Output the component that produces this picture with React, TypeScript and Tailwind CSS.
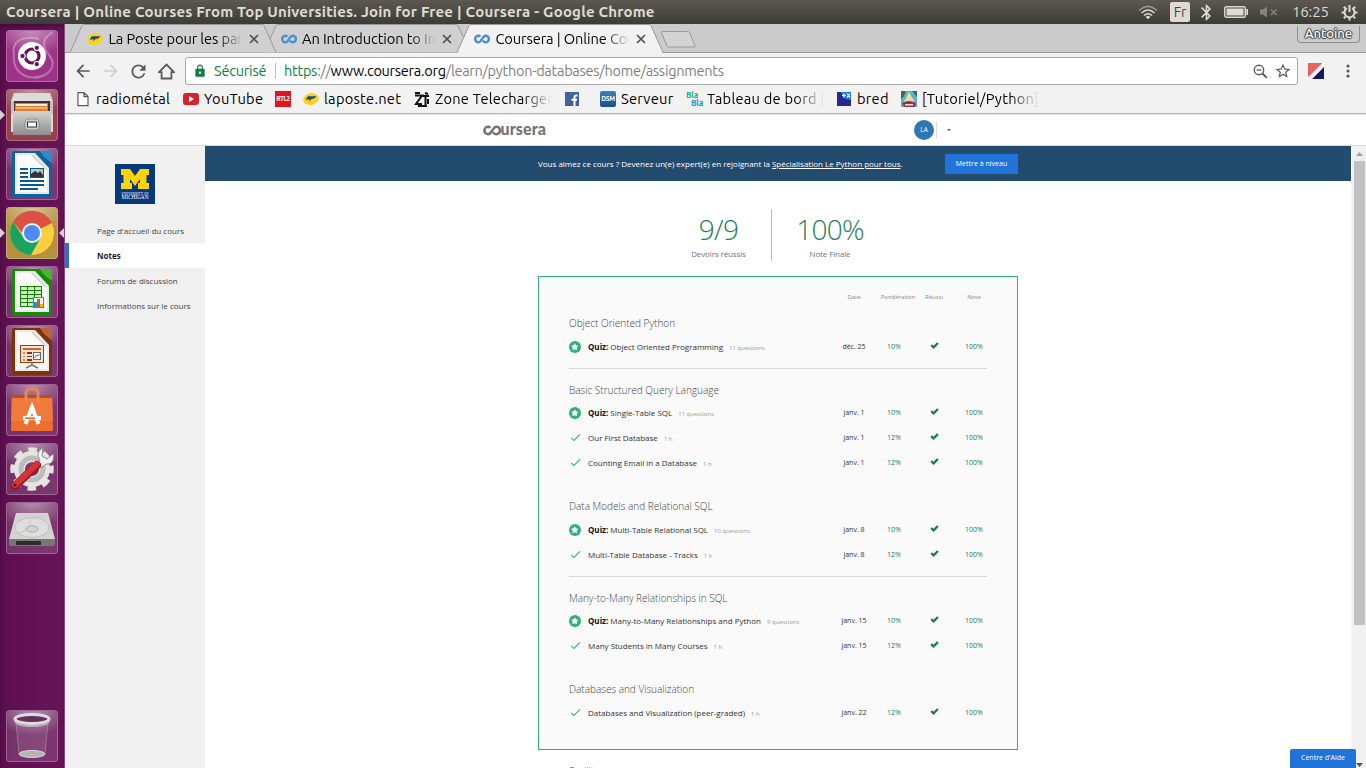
import type { ReactNode } from "react";
import { MdArrowBack, MdArrowForward, MdRefresh, MdLock, MdStarBorder, MdCheck, MdBluetooth } from "react-icons/md";
import { FaStar } from "react-icons/fa";

/* ---------- small marks ---------- */

function CourseraMark({ className, color = "#4a90d0", width = 3 }: { className: string; color?: string; width?: number }) {
  return (
    <svg className={className} viewBox="0 0 20 12" fill="none" stroke={color} strokeWidth={width}>
      <path d="M8 3C7.300 2.300 6.500 1.900 5.500 1.900a4.100 4.100 0 0 0 0 8.200c4.200 0 4.800-8.200 9-8.200a4.100 4.100 0 0 1 0 8.200c-1.600 0-2.900-.9-3.600-2.200" />
    </svg>
  );
}

function PosteMark() {
  return (
    <svg className="size-4 shrink-0" viewBox="0 0 16 16">
      <ellipse cx="8" cy="8" rx="7.800" ry="5.800" fill="#fbd31a" transform="rotate(-14 8 8)" />
      <path d="M5 5.300h5.500l3-.3-2.500 2.700H9L5.500 11l1.500-2.600H2.500z" fill="#1d4d7c" />
    </svg>
  );
}

/* ---------- launcher ---------- */

function Tile({ children, tint = "bg-white/15", active = false }: { children?: ReactNode; tint?: string; active?: boolean }) {
  return (
    <div className="relative flex h-[52px] w-full shrink-0 justify-center">
      <div className={`relative -left-[0.5px] size-[52px] overflow-hidden rounded-[4px] border border-white/25 ${tint}`}>
        <svg className="size-full" viewBox="1 1 50 50">
          <defs>
            <radialGradient id="sheen" cx="0.5" cy="0" r="0.75">
              <stop offset="0" stopColor="#fff" stopOpacity="0.45" />
              <stop offset="1" stopColor="#fff" stopOpacity="0" />
            </radialGradient>
          </defs>
          <rect width="52" height="34" fill="url(#sheen)" />
          {children}
        </svg>
      </div>
      {active && (
        <svg className="absolute top-[21px] left-0 h-2.5 w-[5px]" viewBox="0 0 5 10">
          <path d="M0 0l5 5-5 5z" fill="#d8d0d6" />
        </svg>
      )}
    </div>
  );
}

function OfficePage({ dark, mid, children }: { dark: string; mid: string; children: ReactNode }) {
  return (
    <>
      <path d="M8 3h26l12 13v31q0 3-3 3H9q-3 0-3-3V5q0-2 2-2z" fill={dark} />
      <path d="M34 3h10q2 0 2 2v9q-7-2-12-11z" fill={mid} />
      <path d="M9 5h20l14 15v26H9z" fill="#e9e9e9" />
      <path d="M11 7h16l14 15v22H11z" fill="#fafafa" />
      <path d="M27 7l14 15-2-1L25 7z" fill="#c8c8c8" />
      {children}
    </>
  );
}

function Launcher() {
  const metal = (
    <defs>
      <linearGradient id="metal" x1="0" y1="0" x2="0" y2="1">
        <stop offset="0" stopColor="#d4d4d2" />
        <stop offset="1" stopColor="#8e8e8c" />
      </linearGradient>
    </defs>
  );
  return (
    <nav className="flex w-[65px] shrink-0 flex-col gap-[7px] border-r border-[#8a4b80] bg-linear-to-r from-[#5c0f50] to-[#681558] pt-1.5 shadow-[inset_0_3px_4px_rgba(0,0,0,0.3)]">
      <Tile tint="bg-[#9d3487]">
        <g fill="none" stroke="#fff" strokeOpacity="0.3" strokeWidth="2">
          <path d="M47 2c-9 5-13 12-4 23s0 21-14 23M8 25C5 11 17 5 33 9M8 25c-2 18 14 27 31 20" />
        </g>
        <circle cx="26" cy="26" r="14" fill="#fff" />
        <circle cx="26" cy="26" r="7" fill="none" stroke="#66155c" strokeWidth="3.200" />
        <g fill="#66155c" stroke="#fff" strokeWidth="1.100">
          <circle cx="16.500" cy="26" r="2.700" />
          <circle cx="30.800" cy="17.800" r="2.700" />
          <circle cx="30.800" cy="34.200" r="2.700" />
        </g>
      </Tile>
      <Tile tint="bg-[#94414d]" active>
        {metal}
        <path d="M8 4h36l3 8v31H5V12z" fill="#dcdcda" />
        <path d="M5 12h42v13H5z" fill="#c4c4c2" />
        <path d="M8 12h36v10H8z" fill="#4b3030" />
        <path d="M9 14h33v8H9z" fill="#e07b34" />
        <path d="M10 15h31v2H10z" fill="#fff0d8" />
        <path d="M10 18h31v2H10z" fill="#ffb25a" />
        <path d="M7 22h38v24H7z" fill="url(#metal)" />
        <rect x="19" y="30" width="14" height="11" rx="3" fill="#cfcfcd" stroke="#909090" />
        <rect x="21.500" y="33" width="9" height="5" fill="#fff" stroke="#333" />
      </Tile>
      <Tile>
        <OfficePage dark="#0e639c" mid="#2c8cc8">
          <path d="M14 20h8v2h-8zM14 24h8v2h-8zM14 28h8v2h-8zM14 32h24v2H14zM14 36h24v2H14zM14 40h18v2H14z" fill="#0b5a8e" />
          <rect x="24.500" y="20.500" width="13" height="9" fill="#9ed0ee" stroke="#0b5a8e" />
          <path d="M25 29v-3l4-3 3 2 2-2 3 4v2z" fill="#333" />
          <circle cx="35" cy="22.500" r="1.500" fill="#f4b400" />
        </OfficePage>
      </Tile>
      <div className="relative">
        <Tile tint="bg-[#b3913f]" active>
          <circle cx="26" cy="26" r="22" fill="#ffcd40" />
          <path d="M26 26L7 15A22 22 0 0 1 46 16z" fill="#dd5144" />
          <path d="M26 16h19.700A22 22 0 0 0 7 15l10 12z" fill="#dd5144" />
          <path d="M7 15A22 22 0 0 0 25 48l9.500-17L20 34z" fill="#1aa260" />
          <circle cx="26" cy="26" r="10" fill="#f4f4f4" />
          <circle cx="26" cy="26" r="8" fill="#4c8bf5" />
        </Tile>
        <svg className="absolute top-[21px] right-0 h-2.5 w-[5px]" viewBox="0 0 5 10">
          <path d="M5 0L0 5l5 5z" fill="#d8d0d6" />
        </svg>
      </div>
      <Tile>
        <OfficePage dark="#178a08" mid="#46b532">
          <rect x="14" y="20" width="22" height="21" fill="#118000" />
          <g fill="#d3f4c4">
            {[21, 25, 29, 33, 37].map((y) => (
              <path key={y} d={`M15 ${y}h6v3h-6zM22 ${y}h6v3h-6zM29 ${y}h6v3h-6z`} />
            ))}
          </g>
          <rect x="27.500" y="31.500" width="10" height="10" fill="#fff" stroke="#777" />
          <path d="M28 36h3v5h-3z" fill="#1e90e0" />
          <path d="M31 33h3v8h-3z" fill="#d0581c" />
          <path d="M34 38h3v3h-3z" fill="#f4b400" />
        </OfficePage>
      </Tile>
      <Tile>
        <OfficePage dark="#7e3207" mid="#b9653a">
          <rect x="14.500" y="20.500" width="23" height="17" fill="#f7e3d8" stroke="#9c3c08" />
          <path d="M17 23h18v2H17z" fill="#d86020" />
          <path d="M17 27h2v2h-2zM17 31h2v1h-2zM17 34h2v2h-2z" fill="#e08050" />
          <path d="M21 27h5v2h-5zM21 31h5v1h-5zM21 34h5v2h-5z" fill="#8c3608" />
          <rect x="27.500" y="27.500" width="7" height="7" fill="#fff" stroke="#666" />
          <path d="M28.500 33l2-3 1.500 1 2-2.500" stroke="#1a9a1a" fill="none" />
          <path d="M26 38v2l-6 3M26 40l6 3" stroke="#777" strokeWidth="1.500" fill="none" />
        </OfficePage>
      </Tile>
      <Tile>
        <path d="M6 11h40l1 36H5z" fill="#ec6f2e" />
        <path d="M6 11h40l1 26H5z" fill="#ee7a3c" />
        <path d="M6 11h40v3H6z" fill="#b85018" />
        <path d="M20 18V9q0-4 4-4h4q4 0 4 4v9" fill="none" stroke="#e8835a" strokeWidth="3" />
        <path d="M19.500 40l6.500-17 6.500 17" fill="none" stroke="#fff" strokeWidth="4" />
        <path d="M17 32h18v4H17z" fill="#fff" />
        <path d="M19 33.500h10v1.500H19z" fill="#e86018" />
      </Tile>
      <Tile>
        <circle cx="26" cy="26" r="19" fill="none" stroke="#e2e2e0" strokeWidth="5.500" strokeDasharray="8.400 6.520" strokeDashoffset="4.200" />
        <circle cx="26" cy="26" r="12.500" fill="none" stroke="#e4e4e2" strokeWidth="11" />
        <circle cx="26" cy="26" r="11" fill="none" stroke="#bcbcba" strokeWidth="5" />
        <path d="M37 5c-6 3-6 8-3 12l-3 4 4 4 5-4c6 1 9-5 7-10l-6 5-5-3z" fill="#f2f2f2" stroke="#8b8b89" />
        <path d="M31 22L9 43" stroke="#96161b" strokeWidth="8" strokeLinecap="round" />
        <path d="M31 21L9 42" stroke="#d43437" strokeWidth="6" strokeLinecap="round" />
        <circle cx="9" cy="42" r="1.500" fill="#761015" />
      </Tile>
      <Tile>
        <path d="M10 11h32l7 26H3z" fill="#d4d4d2" />
        <path d="M3 37h46v5q0 2-2 2H5q-2 0-2-2z" fill="#777" />
        <path d="M10 39h25v4H10z" fill="#2c2c2c" />
        <ellipse cx="26" cy="25.500" rx="17" ry="10" fill="#dededc" stroke="#c0c0be" />
        <ellipse cx="26" cy="27" rx="6" ry="3" fill="#d4d4d2" stroke="#aaa" />
        <path d="M10 32q16-4 14-10t14-8" fill="none" stroke="#c4c4c4" />
      </Tile>
      <div className="mt-auto mb-1.5">
        <Tile>
          <path d="M10 11l3 33q13 6 26 0l3-33z" fill="#ddd0dc" fillOpacity="0.12" stroke="#fff" strokeOpacity="0.25" />
          <ellipse cx="26" cy="44" rx="13" ry="3.500" fill="#b5b5b3" stroke="#d5d5d3" />
          <ellipse cx="26" cy="9" rx="17" ry="4.500" fill="#63305c" stroke="#dcdcda" strokeWidth="3" />
          <path d="M8 9q1 6 18 6t18-6l-1 4q-4 4-17 4T9 13z" fill="#b9b9b7" />
        </Tile>
      </div>
    </nav>
  );
}

/* ---------- system bar ---------- */

function SystemBar() {
  return (
    <header className="flex h-6 shrink-0 items-center bg-linear-to-b from-[#5b5950] to-[#3c3b37] pl-1.5 text-[#dfdbd2]">
      <h1 className="grow text-[15px] font-bold tracking-[0.200px] whitespace-nowrap">
        Coursera | Online Courses From Top Universities. Join for Free | Coursera - Google Chrome
      </h1>
      <svg className="h-4 w-5 shrink-0" viewBox="0 0 20 16" fill="none" stroke="#dfdbd2" strokeWidth="1.600">
        <path d="M1 6.500q9-8 18 0" strokeOpacity="0.55" />
        <path d="M3.500 9q6.500-6 13 0M6 11.500q4-3.500 8 0" />
        <path d="M7.500 13q2.500-2 5 0L10 15.300z" fill="#dfdbd2" stroke="none" />
      </svg>
      <span className="ml-3 flex h-5 w-5 shrink-0 items-center justify-center rounded-[2px] bg-[#dfdbd2] text-[14px] text-[#45443f]">Fr</span>
      <MdBluetooth className="ml-[7px] size-[19px] shrink-0" />
      <svg className="ml-2 h-3.5 w-6 shrink-0" viewBox="0 0 24 14">
        <rect x="0.750" y="1.750" width="20.500" height="10.500" rx="1.500" fill="none" stroke="#dfdbd2" strokeWidth="1.400" />
        <path d="M2.500 3.500h17v7h-17zM22.300 4H24v6h-1.700z" fill="#dfdbd2" />
      </svg>
      <svg className="ml-3 h-3.5 w-[18px] shrink-0" viewBox="0 0 18 14">
        <path d="M0 4.500h3l4-3v11l-4-3H0z" fill="#85837b" />
        <path d="M11 4.500l5.500 5.500M16.500 4.500L11 10" stroke="#85837b" strokeWidth="1.500" />
      </svg>
      <span className="ml-[14px] w-10 shrink-0 text-[15px] tracking-[-0.150px] whitespace-nowrap">16:25</span>
      <svg className="mr-2 ml-[9px] size-[17px] shrink-0" viewBox="0 0 17 17" fill="none" stroke="#dfdbd2">
        <path d="M5.800 4.200a5 5 0 1 0 5.400 0" strokeWidth="2" />
        <path d="M8.500 1v7" strokeWidth="2" />
        <path d="M.5 8.500h2.500M14 8.500h2.500M2.800 2.800l1.500 1.500M14.200 2.800l-1.500 1.500M2.800 14.200l1.500-1.500M14.200 14.200l-1.500-1.500M8.500 14v2.500" strokeWidth="2" />
      </svg>
    </header>
  );
}

/* ---------- browser chrome ---------- */

function Tab({ icon, title, stack, active = false }: { icon: ReactNode; title: string; stack: string; active?: boolean }) {
  return (
    <div className={`relative -mr-[12.500px] h-[29px] w-[206px] shrink-0 ${stack}`}>
      <svg className="absolute inset-0 h-[29px] w-[206px]" viewBox="0 0 206 29">
        <path d="M0 28.500L12 1.500Q12.500.5 14 .5H192Q193.500.5 194 1.500L206 28.500" fill={active ? "#f2f2f2" : "#d0d0d0"} stroke="#999" />
        {active && <path d="M1 28h204v1H1z" fill="#f2f2f2" />}
      </svg>
      <div className="relative flex h-full items-center pl-[17px]">
        {icon}
        <span className="ml-[5.500px] w-[134px] overflow-hidden mask-r-from-80% text-[14.667px] tracking-[-0.120px] whitespace-nowrap text-black">{title}</span>
        <svg className="ml-[6px] size-2.5 shrink-0" viewBox="0 0 10 10">
          <path d="M1 1l8 8M9 1L1 9" stroke="#505050" strokeWidth="1.700" />
        </svg>
      </div>
    </div>
  );
}

function TabStrip() {
  return (
    <div className="flex h-[29px] shrink-0 items-start bg-[#cbcbcb] pl-[5px] shadow-[inset_0_-1px_0_#999]">
      <Tab stack="z-20" icon={<PosteMark />} title="La Poste pour les particuliers" />
      <Tab stack="z-10" icon={<CourseraMark className="h-4 w-4 shrink-0" />} title="An Introduction to Interactive" />
      <Tab stack="z-30" active icon={<CourseraMark className="h-4 w-4 shrink-0" />} title="Coursera | Online Courses" />
      <svg className="mt-[7px] ml-[10px] h-[17px] w-[35px] shrink-0" viewBox="0 0 35 17">
        <path d="M1.500.5h25q1.500 0 2 1l5.500 13q.5 1.500-1 1.500H8q-1.500 0-2-1L.7 2Q.3.5 1.500.5z" fill="#d3d3d3" stroke="#999" />
      </svg>
      <div className="mt-0.5 mr-1.5 ml-auto flex h-[17px] w-[63px] items-center justify-center rounded-b-[4px] border border-t-0 border-[#8f8f8f] text-[13px] font-medium text-white [text-shadow:0_0_1px_#333,1px_0_1px_#444,-1px_0_1px_#444,0_1px_1px_#444,0_-1px_1px_#444]">
        Antoine
      </div>
    </div>
  );
}

function AddressRow() {
  return (
    <div className="flex h-[36px] shrink-0 items-center bg-[#f2f2f2] pl-[8px] text-[#5a5a5a]">
      <MdArrowBack className="size-5 shrink-0" />
      <MdArrowForward className="ml-2 size-5 shrink-0 text-[#d0d0d0]" />
      <MdRefresh className="ml-[7px] size-[21px] shrink-0" />
      <svg className="ml-[9px] size-[17px] shrink-0" viewBox="0 0 17 17" fill="none" stroke="#5a5a5a" strokeWidth="1.800">
        <path d="M1 9.200L8.500 1.500 16 9.200h-2.600v6.300H3.600V9.200z" />
      </svg>
      <div className="ml-[10px] flex h-7 w-[1113px] shrink-0 items-center rounded-[3px] border border-[#a9a9a9] bg-white pl-[7px] text-[14.500px] whitespace-nowrap">
        <MdLock className="size-[14px] shrink-0 text-[#0b8043]" />
        <span className="ml-[7px] w-[53px] tracking-[-0.200px] text-[#0b8043]">Sécurisé</span>
        <span className="ml-2 h-4 w-px bg-[#c0c0c0]" />
        <span className="ml-2 grow tracking-[-0.265px] text-[#808080]">
          <span className="text-[#0b8043]">https</span>://<span className="text-black">www.coursera.org</span>/learn/python-databases/home/assignments
        </span>
        <svg className="size-[15px] shrink-0" viewBox="0 0 15 15" fill="none" stroke="#5a5a5a">
          <circle cx="6" cy="6" r="4.700" strokeWidth="1.400" />
          <path d="M3.500 6h5" strokeWidth="1.300" />
          <path d="M9.500 9.500l4.300 4.300" strokeWidth="1.900" />
        </svg>
        <MdStarBorder className="mr-[5px] ml-[6px] size-[18px]" />
      </div>
      <svg className="ml-[10px] size-4 shrink-0" viewBox="0 0 16 16">
        <path d="M0 0h16v16H0z" fill="#fff" />
        <path d="M0 0h14.500L0 14.500z" fill="#e8665f" />
        <path d="M16 4v12H4z" fill="#1c1464" />
      </svg>
      <svg className="ml-[22px] h-3.5 w-1 shrink-0" viewBox="0 0 4 14" fill="#5a5a5a">
        <circle cx="2" cy="2" r="1.600" />
        <circle cx="2" cy="7" r="1.600" />
        <circle cx="2" cy="12" r="1.600" />
      </svg>
    </div>
  );
}

function Bookmark({ icon, label, width, fade = false }: { icon: ReactNode; label?: string; width: string; fade?: boolean }) {
  return (
    <div className={`flex shrink-0 items-center gap-[5px] ${width}`}>
      {icon}
      {label && <span className={`whitespace-nowrap ${fade ? "w-[117px] overflow-hidden mask-r-from-75%" : ""}`}>{label}</span>}
    </div>
  );
}

function BookmarkBar() {
  const box = "size-4 shrink-0";
  return (
    <div className="flex h-[25px] shrink-0 items-center border-b border-[#b2b2b2] bg-[#f2f2f2] pb-[5px] pl-[10px] text-[14.667px] tracking-[0.240px] text-black">
      <Bookmark width="w-[108px]" label="radiométal" icon={
        <svg className={box} viewBox="0 0 16 16" fill="#fff" stroke="#5a5a5a" strokeWidth="1.200">
          <path d="M3 1.600h6l4 4v9H3zM9 1.600v4h4" />
        </svg>} />
      <Bookmark width="w-[92px]" label="YouTube" icon={
        <svg className={box} viewBox="0 0 16 16">
          <rect y="2" width="16" height="12" rx="3" fill="#d42428" />
          <path d="M6 5l5 3-5 3z" fill="#fff" />
        </svg>} />
      <Bookmark width="w-[28px]" icon={
        <span className="flex size-4 items-center justify-center bg-[#e0141e] text-[6.500px] font-bold tracking-[-0.500px] text-white">RTL2</span>} />
      <Bookmark width="w-[111px]" label="laposte.net" icon={<PosteMark />} />
      <Bookmark width="w-[150px]" fade label="Zone Telecharger" icon={
        <svg className={box} viewBox="0 0 16 16" fill="none" stroke="#111" strokeWidth="2">
          <path d="M1 2h5M11 2l3 1M1 4.500h7L2 13h6M8 5h7M11.500 5v9M14 13V8M4 15h9" />
        </svg>} />
      <Bookmark width="w-[36px]" icon={
        <svg className="ml-px size-[14px] shrink-0" viewBox="0 0 14 14">
          <path d="M0 0h14v14H0z" fill="#4560a0" />
          <path d="M12.500 3.500h-1.700q-1.300 0-1.300 1.500v9M6.500 7.800h5.500" stroke="#fff" strokeWidth="2" fill="none" />
        </svg>} />
      <Bookmark width="w-[86px]" label="Serveur" icon={
        <span className="flex size-4 shrink-0 items-center justify-center rounded-[2px] bg-linear-to-b from-[#3c82c0] to-[#164f88] text-[6.500px] font-bold tracking-[-0.300px] text-white">DSM</span>} />
      <Bookmark width="w-[150px]" fade label="Tableau de bord | Bla" icon={
        <span className="flex size-4 shrink-0 flex-col text-[8.500px] leading-[8px] font-bold tracking-[-0.300px]">
          <span className="text-[#12b28c]">Bla</span>
          <span className="-mr-px self-end text-[#1098dc]">Bla</span>
        </span>} />
      <Bookmark width="w-[65px]" label="bred" icon={
        <svg className={box} viewBox="0 0 16 16">
          <path d="M1 1h14v14H1z" fill="#28288c" />
          <path d="M5 1h10v8q-9 0-10-8z" fill="#1478f0" />
          <path d="M6 4.500h4M8 2.500v4M11 2.500l3 4M14 2.500l-3 4" stroke="#fff" strokeWidth="1.200" />
        </svg>} />
      <Bookmark width="w-[140px]" fade label="[Tutoriel/Python]" icon={
        <svg className={box} viewBox="0 0 16 16">
          <path d="M0 0h16v16H0z" fill="#58b4c8" />
          <path d="M0 0h5l-2 5-3 3zM11 0h5v6z" fill="#3d6b4b" />
          <path d="M8 1l4 7 2 4H2l3-5z" fill="#f0d8a8" />
          <path d="M1 12q7-4 14 0l-1 4H3z" fill="#8c3848" />
          <path d="M4 13h8v1.500H4z" fill="#e8e0e8" />
        </svg>} />
    </div>
  );
}

/* ---------- page ---------- */

function PageHeader() {
  return (
    <div className="mt-px flex h-[31px] shrink-0 items-center border-b border-[#dedede] bg-white pl-[418px]">
      <div className="flex w-[431px] items-center text-[#757575]">
        <CourseraMark className="h-[11px] w-[18.500px] shrink-0" color="#757575" width={2.800} />
        <span className="-mt-[3px] -ml-px font-['Lato'] text-[16px] leading-none font-black tracking-[0.100px]">ursera</span>
      </div>
      <span className="flex size-5 items-center justify-center rounded-full bg-[#2f77b4] text-[6.500px] text-white">LA</span>
      <span className="ml-[2px] h-[17px] w-px bg-[#dcdcdc]" />
      <svg className="ml-2.5 h-[2px] w-1" viewBox="0 0 4 2"><path d="M0 0h4L2 2z" fill="#555" /></svg>
    </div>
  );
}

function Sidebar() {
  return (
    <aside className="flex w-[140px] shrink-0 flex-col bg-[#f0f0f0] pt-[18px] text-[8px] text-[#444]">
      <svg className="mx-auto size-10 shrink-0" viewBox="0 0 40 40">
        <path d="M0 0h40v40H0z" fill="#06397c" />
        <path d="M6 5h9l5 7 5-7h9v6h-2.500v8H34v6H23v-6h2v-4l-5 7-5-7v4h2v6H6v-6h2.500v-8H6z" fill="#ffd50a" />
        <text x="20" y="30.500" textAnchor="middle" textLength="27" lengthAdjust="spacingAndGlyphs" fill="#fff" fontFamily="Liberation Serif" fontSize="4">UNIVERSITY OF</text>
        <text x="20" y="35.300" textAnchor="middle" textLength="27" lengthAdjust="spacingAndGlyphs" fill="#fff" fontFamily="Liberation Serif" fontSize="5.500">MICHIGAN</text>
      </svg>
      <div className="mt-[14px] flex flex-col">
        <a className="flex h-[25px] items-center pl-8">Page d'accueil du cours</a>
        <a className="flex h-[25px] items-center border-l-4 border-[#2a73cc] bg-white pl-7 font-bold text-[#1f1f1f]">Notes</a>
        <a className="flex h-[25px] items-center pl-8">Forums de discussion</a>
        <a className="flex h-[25px] items-center pl-8">Informations sur le cours</a>
      </div>
    </aside>
  );
}

type Item = { title: string; meta: string; date: string; weight: string; quiz?: boolean };
type Section = { name: string; box: string; head: string; items: Item[] };

const sections: Section[] = [
  {
    name: "Object Oriented Python",
    box: "mt-[8px] pb-[9px] border-b border-[#d9d9d9]",
    head: "h-[23px] pt-[2px]",
    items: [{ quiz: true, title: "Object Oriented Programming", meta: "11 questions", date: "déc. 25", weight: "10%" }],
  },
  {
    name: "Basic Structured Query Language",
    box: "mt-[9px]",
    head: "h-[22px] pt-[3px]",
    items: [
      { quiz: true, title: "Single-Table SQL", meta: "11 questions", date: "janv. 1", weight: "10%" },
      { title: "Our First Database", meta: "1 h", date: "janv. 1", weight: "12%" },
      { title: "Counting Email in a Database", meta: "1 h", date: "janv. 1", weight: "12%" },
    ],
  },
  {
    name: "Data Models and Relational SQL",
    box: "mt-[19px] pb-[9px] border-b border-[#d9d9d9]",
    head: "h-[23px] pt-[2px]",
    items: [
      { quiz: true, title: "Multi-Table Relational SQL", meta: "10 questions", date: "janv. 8", weight: "10%" },
      { title: "Multi-Table Database - Tracks", meta: "1 h", date: "janv. 8", weight: "12%" },
    ],
  },
  {
    name: "Many-to-Many Relationships in SQL",
    box: "mt-[9px]",
    head: "h-[22px] pt-[3px]",
    items: [
      { quiz: true, title: "Many-to-Many Relationships and Python", meta: "9 questions", date: "janv. 15", weight: "10%" },
      { title: "Many Students in Many Courses", meta: "1 h", date: "janv. 15", weight: "12%" },
    ],
  },
  {
    name: "Databases and Visualization",
    box: "mt-[19px]",
    head: "h-[23px] pt-[2px]",
    items: [{ title: "Databases and Visualization (peer-graded)", meta: "1 h", date: "janv. 22", weight: "12%" }],
  },
];

function Row({ item }: { item: Item }) {
  return (
    <div className="-mr-[7px] flex h-[25px] items-center text-[8px] text-[#333]">
      <span className="flex w-[19px] shrink-0 items-center">
        {item.quiz ? (
          <span className="flex size-3 items-center justify-center rounded-full bg-[#2ab27b] text-white">
            <FaStar className="size-[7.500px]" />
          </span>
        ) : (
          <MdCheck className="size-[13px] text-[#2ab27b]" />
        )}
      </span>
      <span className="grow whitespace-nowrap">
        {item.quiz && <b className="text-[#111]">Quiz: </b>}
        {item.title}
        <span className="ml-1.5 text-[6px] text-[#999]">{item.meta}</span>
      </span>
      <span className="w-10 pb-px text-center text-[7px] leading-[9px]">{item.date}</span>
      <span className="w-10 pb-px text-center text-[7px] leading-[9px] text-[#1d8055]">{item.weight}</span>
      <span className="flex w-10 justify-center pb-[2px]">
        <svg className="h-[7px] w-[9px]" viewBox="0 0 9 7" fill="none" stroke="#1d7c50" strokeWidth="2.300">
          <path d="M1.200 3.200L3.600 5.400 7.900 1" />
        </svg>
      </span>
      <span className="w-10 pb-px text-center text-[7px] leading-[9px] text-[#1d8055]">100%</span>
    </div>
  );
}

function Assignments() {
  return (
    <section className="mx-auto mt-[15px] h-[474px] w-[480px] shrink-0 border border-[#2ab27b] bg-[#fafafa] px-[30px] pt-[15px]">
      <div className="-mr-[7px] flex h-[11px] items-center justify-end text-[6px] text-[#888]">
        <span className="w-10 text-center">Date</span>
        <span className="flex w-10 justify-center pl-2">Pondération</span>
        <span className="w-10 text-center">Réussi</span>
        <span className="w-10 text-center">Note</span>
      </div>
      {sections.map((s) => (
        <div key={s.name} className={s.box}>
          <h2 className={`flex items-center text-[10px] font-light text-[#444] ${s.head}`}>{s.name}</h2>
          {s.items.map((item) => <Row key={item.title} item={item} />)}
        </div>
      ))}
    </section>
  );
}

function Main() {
  return (
    <main className="flex grow flex-col overflow-hidden bg-white">
      <div className="flex h-[35px] shrink-0 items-center bg-[#234b6e] pl-[333px] text-[8px] text-white">
        <span className="w-[407px] whitespace-nowrap">
          Vous aimez ce cours ? Devenez un(e) expert(e) en rejoignant la <u className="underline-offset-1">Spécialisation Le Python pour tous</u>.
        </span>
        <span className="flex h-5 w-[73px] items-center justify-center bg-[#2073d8] text-[7px] leading-[10px] tracking-[0.030px]">Mettre à niveau</span>
      </div>
      <div className="mt-7 flex h-[52px] shrink-0 pl-[461px] text-[#1d8055]">
        <div className="flex w-[106px] flex-col items-center border-r border-[#bdbdbd]">
          <span className="mt-1 text-[28px] leading-[32px] font-light tracking-[-0.700px]">9/9</span>
          <span className="mt-[3px] text-[8px] leading-[12px] tracking-[-0.120px] text-[#757575]">Devoirs réussis</span>
        </div>
        <div className="flex w-[116px] flex-col items-center">
          <span className="mt-1 text-[28px] leading-[32px] font-light tracking-[-0.700px]">100%</span>
          <span className="mt-[3px] text-[8px] leading-[12px] tracking-[-0.120px] text-[#757575]">Note Finale</span>
        </div>
      </div>
      <Assignments />
      <div className="mt-[14px] ml-[364px] text-[10px] leading-[14px] font-light text-[#444]">Facilitez vos cours</div>
    </main>
  );
}

function ScrollBar() {
  return (
    <div className="flex w-[15px] shrink-0 flex-col items-center border-l border-[#f7f7f7] bg-[#f0f0f0] pt-[6px]">
      <svg className="h-1 w-[7px] shrink-0" viewBox="0 0 7 4"><path d="M0 4h7L3.500 0z" fill="#a3a3a3" /></svg>
      <div className="mt-[5px] h-[464px] w-[11px] bg-[#c1c1c1]" />
      <svg className="mt-auto mb-px h-1 w-[7px] shrink-0" viewBox="0 0 7 4"><path d="M0 0h7L3.500 4z" fill="#505050" /></svg>
    </div>
  );
}

export default function App() {
  return (
    <div className="relative flex h-[768px] w-[1366px] flex-col overflow-hidden font-['Ubuntu','Noto_Sans',sans-serif]">
      <SystemBar />
      <div className="flex min-h-0 grow">
        <Launcher />
        <div className="flex min-w-0 grow flex-col bg-[#e8e8e8]">
          <TabStrip />
          <AddressRow />
          <BookmarkBar />
          <div className="flex min-h-0 grow flex-col font-['Open_Sans','Noto_Sans',sans-serif]">
            <PageHeader />
            <div className="flex min-h-0 grow">
              <Sidebar />
              <Main />
              <ScrollBar />
            </div>
          </div>
        </div>
      </div>
      <a className="absolute right-[10px] bottom-0 flex h-[19px] w-[66px] items-center justify-center rounded-t-[2px] bg-[#2073d8] font-['Open_Sans',sans-serif] text-[7px] text-white">
        Centre d'Aide
      </a>
    </div>
  );
}
